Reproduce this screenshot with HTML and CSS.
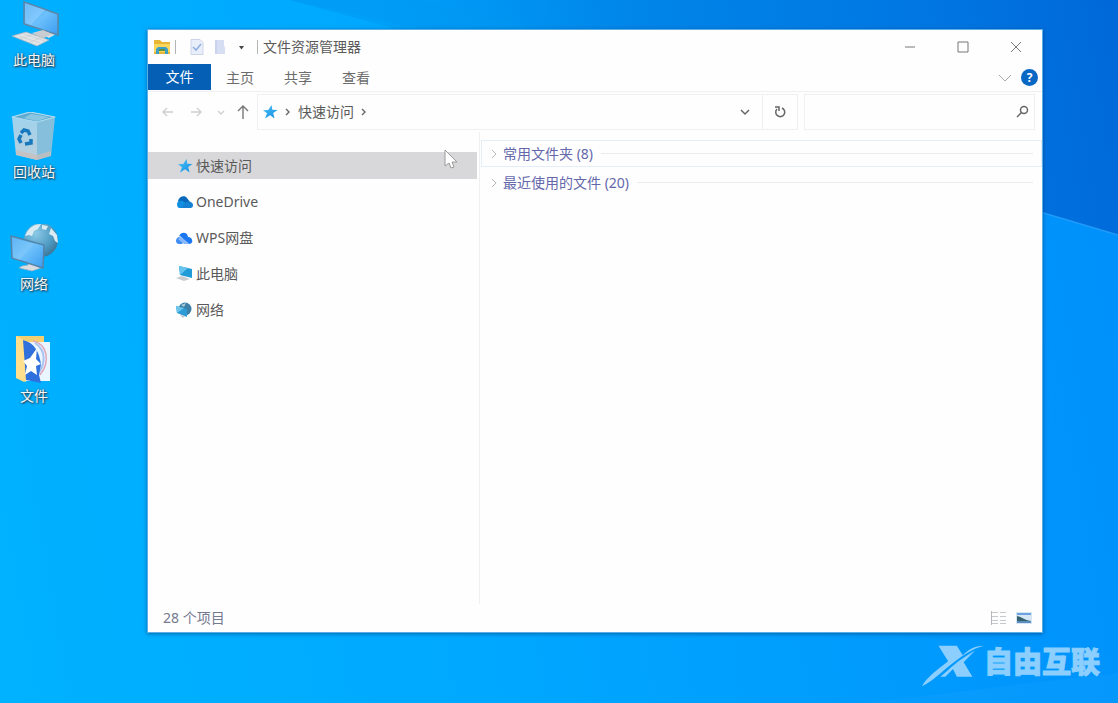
FILE: index.html
```html
<!DOCTYPE html>
<html lang="zh-CN">
<head>
<meta charset="utf-8">
<meta name="viewport" content="width=device-width, initial-scale=1">
<title>文件资源管理器</title>
<link rel="stylesheet" href="styles.css">
</head>
<body>
<svg class="defs" aria-hidden="true">
  <defs>
    <linearGradient id="screen" x1="0" y1="0" x2="1" y2="1">
      <stop offset="0" stop-color="#3fa2ee"/><stop offset=".5" stop-color="#6cc0fb"/><stop offset="1" stop-color="#3b9cf0"/>
    </linearGradient>
    <linearGradient id="binSide" x1="0" y1="0" x2="0" y2="1">
      <stop offset="0" stop-color="#9fd2ee"/><stop offset="1" stop-color="#b9cfdb"/>
    </linearGradient>
    <radialGradient id="globe" cx=".35" cy=".3" r=".8">
      <stop offset="0" stop-color="#8cc9e6"/><stop offset=".6" stop-color="#4f9cc4"/><stop offset="1" stop-color="#3a6f8e"/>
    </radialGradient>
    <linearGradient id="starFill" x1="0" y1="0" x2="1" y2="1">
      <stop offset="0" stop-color="#4cc0f5"/><stop offset="1" stop-color="#138fe4"/>
    </linearGradient>
    <symbol id="star" viewBox="0 0 16 16">
      <path fill="url(#starFill)" d="M9.500 1l.8 4.800 5.200.2-4.300 3 1.300 5.500-4.300-3.200-5.200 3.200 2-5.300L1 6.300l5.300-.4z"/>
    </symbol>
  </defs>
</svg>

<main class="desktop">
  <svg class="wallpaper" viewBox="0 0 1118 703" preserveAspectRatio="none" aria-hidden="true">
    <defs>
      <linearGradient id="sky" gradientUnits="userSpaceOnUse" x1="400" y1="120" x2="1118" y2="0">
        <stop offset="0" stop-color="#008fec" stop-opacity=".3"/>
        <stop offset=".35" stop-color="#0085e8"/>
        <stop offset=".75" stop-color="#0076e2"/>
        <stop offset="1" stop-color="#0068d8"/>
      </linearGradient>
    </defs>
    <path fill="url(#sky)" d="M290 0L560 60 1040 212 1118 235V0z"/>
    <path fill="#0098f2" opacity=".5" d="M290 0L400 30H540L420 0z"/>
    <path fill="none" stroke="#1f9bfa" stroke-width="1.5" d="M1040 212L1118 235"/>
    <path fill="#12a0ff" opacity=".35" d="M860 703L1118 673V703z"/>
  </svg>

  <nav class="icons" aria-label="桌面">
    <a class="shortcut" href="#pc">
      <svg viewBox="0 0 52 50">
        <path fill="#d7dde2" d="M32 34l11-4 7 3-9 5z"/>
        <path fill="url(#screen)" stroke="#5b86a8" stroke-width="1.6" d="M16 2l34 12v21L16 24z"/>
        <path fill="#9bd4ff" opacity=".5" d="M17 3l20 7-14 15-6-2z"/>
        <path fill="#c9cdd2" d="M24 33l11-3 9 4-10 5z"/>
        <path fill="#e0e3e6" stroke="#a9b0b8" stroke-width=".7" d="M4 36l14-4 23 8-12 6z"/>
        <path stroke="#c4c8cd" stroke-width=".6" d="M11 36l21 7M16 34l21 7M12 39l14-5M22 42l13-5"/>
      </svg>
      <span>此电脑</span>
    </a>
    <a class="shortcut" href="#bin">
      <svg viewBox="0 0 52 50">
        <path fill="url(#binSide)" d="M4 5l25 5v38L8 43z"/>
        <path fill="#86bfdc" d="M29 10l18-5-4 39-14 4z"/>
        <path fill="#60acd0" stroke="#b4dcef" stroke-width="1.2" stroke-linejoin="round" d="M4 5L22 0l25 5-18 5z"/>
        <path fill="#8cc7e2" d="M23 2l18 3-12 4-13-3z"/>
        <path fill="#c9bdbb" opacity=".75" d="M8 38l21 5 14-4v5l-14 4-21-5z"/>
        <g fill="none" stroke="#1878bd" stroke-width="3.500"><path d="M13 21l3-3 4 1 2 4M23 27l0 4-6 1M13 31l-2-4 2-4"/></g>
      </svg>
      <span>回收站</span>
    </a>
    <a class="shortcut" href="#network">
      <svg viewBox="0 0 52 50">
        <circle cx="33" cy="16" r="17" fill="url(#globe)"/>
        <path fill="#d9ecf3" d="M17 12C20 4 26 0 33 0l-3 5-4 2-2 5-3-1zM34 1l6 1-2 4-4-1zM43 4l6 7 1 8-3-2-2-5-4-2z"/>
        <path fill="#d9dde1" stroke="#98a9b6" stroke-width=".6" d="M21 38l-1 3-6 1-3 2 13 3 9-3-5-2v-3z"/>
        <path fill="url(#screen)" stroke="#5484a9" stroke-width="1.5" d="M3 12l33 9-1 23L4 34z"/>
        <path fill="#a4dcff" opacity=".3" d="M4 13l22 7-15 16-6-2z"/>
      </svg>
      <span>网络</span>
    </a>
    <a class="shortcut" href="#files">
      <svg viewBox="0 0 52 50">
        <path fill="#f4cf72" d="M8 0h28v40H18l-2 6-8-4z"/>
        <path fill="#eaf6ff" d="M17 6h25v39H18z"/>
        <path fill="#ffdf8c" d="M8 0l10 5v41L8 42z"/>
        <path fill="none" stroke="#dfa7bd" stroke-width="1.500" d="M25 5c14 3 18 20 7 34"/>
        <path fill="none" stroke="#a9c4f0" stroke-width="2" d="M27 7c11 7 11 20 3 31"/>
        <path fill="#2f70dc" d="M15 4c12 3 16 12 18 24l-2 11 2 8-15-3z"/>
        <path fill="#fff" d="M29 12l-1 11 5 5-5 2 1 9-6-4-6 4 2-9-4-5 7-3z"/>
      </svg>
      <span>文件</span>
    </a>
  </nav>

  <section class="window" aria-label="文件资源管理器">
    <header class="titlebar">
      <svg class="i20" viewBox="0 0 20 20" aria-hidden="true">
        <path fill="#e7b634" d="M2 3h6l2 2h8v12H2z"/><path fill="#fbd65c" d="M2 7h16v8H2z"/>
        <path fill="#3c9fc6" d="M4 17v-5l2-2h8l2 2v5h-3v-3H7v3z"/><path fill="#5c9443" d="M7 12h6v2H7z"/>
      </svg>
      <i class="bar"></i>
      <button class="quick" aria-label="属性"><svg viewBox="0 0 16 18"><path fill="#e9effa" stroke="#ccd5e8" d="M2 1.500h9l3 3v12H2z"/><path fill="none" stroke="#93afe0" stroke-width="1.600" d="M4 9l3 3 5-6"/></svg></button>
      <button class="quick" aria-label="新建文件夹"><svg viewBox="0 0 16 18"><path fill="#d5def3" d="M3 2h9v5l1 3v6H3z"/><path fill="#c8d3ee" d="M3 2h2v14H3z"/></svg></button>
      <button class="quick" aria-label="自定义快速访问工具栏"><svg viewBox="0 0 16 18"><path fill="#444" d="M4 8h5l-2.500 3.500z"/></svg></button>
      <i class="bar title-bar"></i>
      <h1>文件资源管理器</h1>
      <div class="controls">
        <button aria-label="最小化"><svg viewBox="0 0 14 14"><path d="M2 7h10"/></svg></button>
        <button aria-label="最大化"><svg viewBox="0 0 14 14"><path d="M2 2h10v10H2z"/></svg></button>
        <button aria-label="关闭"><svg viewBox="0 0 14 14"><path d="M2 2l10 10M12 2L2 12"/></svg></button>
      </div>
    </header>

    <div class="ribbon">
      <button class="file">文件</button>
      <button>主页</button>
      <button>共享</button>
      <button>查看</button>
      <button class="expand" aria-label="展开功能区"><svg viewBox="0 0 16 16"><path d="M2 5l6 6 6-6"/></svg></button>
      <button class="help" aria-label="帮助">?</button>
    </div>

    <div class="toolbar">
      <div class="history">
        <button class="off" aria-label="后退"><svg viewBox="0 0 16 16"><path d="M13 8H3M7 4L3 8l4 4"/></svg></button>
        <button class="off" aria-label="前进"><svg viewBox="0 0 16 16"><path d="M3 8h10M9 4l4 4-4 4"/></svg></button>
        <button class="off small" aria-label="最近浏览的位置"><svg viewBox="0 0 16 16"><path d="M5 7l3 3 3-3"/></svg></button>
        <button class="up" aria-label="上移"><svg viewBox="0 0 16 16"><path d="M8 15V2M3 7l5-5 5 5"/></svg></button>
      </div>
      <div class="address">
        <svg class="i16" aria-hidden="true"><use href="#star"/></svg>
        <svg class="sep" viewBox="0 0 8 12" aria-hidden="true"><path d="M2 3l3 3-3 3"/></svg>
        <a href="#quick">快速访问</a>
        <svg class="sep" viewBox="0 0 8 12" aria-hidden="true"><path d="M2 3l3 3-3 3"/></svg>
        <button class="drop" aria-label="以前的位置"><svg viewBox="0 0 16 16"><path d="M4 6l4 4 4-4"/></svg></button>
        <button class="refresh" aria-label="刷新"><svg viewBox="0 0 16 16"><path d="M10 4a4.500 4.500 0 1 1-5 1M3 3h4v4"/></svg></button>
      </div>
      <label class="search">
        <input type="text" aria-label="搜索">
        <svg viewBox="0 0 16 16" aria-hidden="true"><circle cx="10" cy="6" r="3.500"/><path d="M7.500 8.500L3 13"/></svg>
      </label>
    </div>

    <div class="content">
      <nav class="tree" aria-label="导航窗格">
        <a class="on" href="#quick"><svg viewBox="0 0 18 16"><use href="#star" x="2" width="16" height="16"/></svg>快速访问</a>
        <a href="#onedrive"><svg viewBox="0 0 18 16"><path fill="#0868bb" d="M3 7c1-5 7-6 9-3l3 4-9 4z"/><path fill="#128fe0" d="M4 14a4 4 0 0 1 0-7c4-1 6 1 10 7z"/><path fill="#1680d2" d="M10 9c3-3 8-1 8 2s-2 3-4 3H6z"/></svg>OneDrive</a>
        <a href="#wps"><svg viewBox="0 0 18 16"><path fill="#1c78f0" d="M4 7c1-6 9-5 9 0 5 0 6 7 1 7L5 6z"/><path fill="#3e8df4" d="M4 7c-4 1-4 7 0 7h3l3-4z"/><path fill="#8ab9fb" d="M3 9l3-2 8 7H9z"/></svg>WPS网盘</a>
        <a href="#pc"><svg viewBox="0 0 18 16"><path fill="#219bd7" d="M4 0l13 3v9L5 9z"/><path fill="#67c4ee" d="M4 0l9 2-8 7z"/><path fill="#c9ccd1" d="M1 12l6-2 8 3-6 2z"/></svg>此电脑</a>
        <a href="#network"><svg viewBox="0 0 18 16"><circle cx="10" cy="7" r="6.500" fill="#3d7fa6"/><path fill="#a9cbd8" d="M6 3l5-2-2 4z"/><path fill="#2d9bd6" d="M1 4l11 3v8L2 11z"/><path fill="#6cc6ec" d="M1 4l8 2-7 5z"/><path fill="#bfc5ca" d="M5 13l5 1-2 2z"/></svg>网络</a>
      </nav>
      <div class="groups">
        <button class="focus"><svg viewBox="0 0 12 12"><path d="M4 2l4 4-4 4"/></svg><span>常用文件夹 (8)</span></button>
        <button><svg viewBox="0 0 12 12"><path d="M4 2l4 4-4 4"/></svg><span>最近使用的文件 (20)</span></button>
      </div>
    </div>

    <footer class="status">
      <span>28 个项目</span>
      <button aria-label="详细信息"><svg viewBox="0 0 16 14"><path fill="none" stroke="#b4b7bb" d="M1.500 0v14"/><path fill="none" stroke="#c6c9cc" stroke-dasharray="6 2" d="M2 1.500h14M2 5.500h14M2 9.500h14M2 12.500h14"/></svg></button>
      <button aria-label="大缩略图"><svg viewBox="0 0 16 14"><path fill="#d7e6f5" d="M0 1h16v12H0z"/><path fill="#6ca2df" d="M1 2h14v2H1z"/><path fill="#35616b" d="M1 5c5 1 7 4 14 5H1z"/><path fill="#5a8cc0" d="M1 10h14v2H1z"/></svg></button>
    </footer>
  </section>

  <svg class="cursor" viewBox="0 0 14 20" aria-hidden="true"><path fill="#fff" stroke="#9a9a9a" d="M1 1v16l4-3 2 5 3-1-2-5h5z"/></svg>

  <div class="brand">
    <svg viewBox="0 0 64 44" aria-hidden="true">
      <path d="M17 1h19l6 10C48 5 54 1 64 1 52 4 42 11 32 19 20 28 12 37 0 43c4-8 12-14 22-22l5-4z"/>
      <path d="M27 26c9-8 17-14 28-20-4 4-8 8-12 12l9 15H36l-4-8-8 8h-5z"/>
    </svg>
    <span>自由互联</span>
  </div>
</main>
</body>
</html>
```
FILE: styles.css
```css
* {
  box-sizing: border-box;
}

body {
  margin: 0;
  font-family: "Noto Sans", "Noto Sans CJK SC", sans-serif;
  font-size: 14px;
  line-height: 20px;
  color: #5a5a5a;
}

button {
  display: flex;
  align-items: center;
  justify-content: center;
  padding: 0;
  border: 0;
  background: none;
  color: inherit;
  font: inherit;
}

a {
  color: inherit;
  text-decoration: none;
}

svg {
  display: block;
  flex: none;
}

.defs {
  position: absolute;
  width: 0;
  height: 0;
}

.desktop {
  position: relative;
  min-height: 100vh;
  overflow: hidden;
  background: linear-gradient(80deg, #00b2ff 0, #00aaff 35%, #008ffb 100%);
}

.wallpaper {
  position: absolute;
  inset: 0;
  width: 100%;
  height: 100%;
}

.icons {
  position: relative;
  display: flex;
  flex-direction: column;
  gap: 42px;
  width: 68px;
}

.shortcut {
  display: flex;
  flex-direction: column;
  align-items: center;
  color: #f4f8fb;
  text-shadow: 1px 1px 2px #234, 0 0 2px #456;
}

.shortcut svg {
  width: 52px;
  height: 50px;
}

.window {
  position: absolute;
  inset: 29px 75px 70px 147px;
  display: flex;
  flex-direction: column;
  border: 1px solid #59aee8;
  background: #fefefe;
  box-shadow: 0 1px 4px rgba(0, 50, 110, 0.55);
}

.titlebar {
  display: flex;
  align-items: center;
  height: 34px;
  padding-left: 4px;
}

.i20 {
  width: 20px;
  height: 20px;
}

.bar {
  width: 1px;
  height: 14px;
  margin: 0 12px 0 3px;
  background: #b5b5b5;
}

.title-bar {
  margin: 0 5px;
}

.quick {
  width: 18px;
  margin-right: 5px;
}

.quick:nth-of-type(3) {
  margin-right: 0;
}

.quick svg {
  width: 16px;
  height: 18px;
}

h1 {
  margin: 0;
  font-size: 14px;
  font-weight: 400;
}

.controls {
  display: flex;
  margin-left: auto;
}

.controls button {
  width: 53px;
  height: 32px;
}

.controls svg {
  width: 14px;
  height: 14px;
  fill: none;
  stroke: #777;
}

.ribbon {
  display: flex;
  align-items: center;
  height: 28px;
  padding-right: 4px;
  border-bottom: 1px solid #f0f0f2;
}

.ribbon button {
  width: 58px;
  height: 26px;
  color: #6c6c6c;
}

.ribbon .file {
  width: 63px;
  align-self: flex-start;
  background: #0560b5;
  color: #fff;
}

.ribbon .expand {
  width: 16px;
  margin: 0 8px 0 auto;
}

.expand svg {
  width: 16px;
  height: 16px;
  fill: none;
  stroke: #aaa;
}

.ribbon .help {
  width: 17px;
  height: 17px;
  border-radius: 50%;
  background: #0868c4;
  color: #fff;
  font-size: 12px;
  font-weight: 700;
}

.toolbar {
  display: flex;
  height: 40px;
  padding: 2px 7px 2px 0;
}

.history {
  display: flex;
  align-items: center;
  width: 109px;
  padding-left: 12px;
  gap: 12px;
}

.history button {
  width: 16px;
  height: 24px;
}

.history .small {
  width: 10px;
}

.history .up {
  margin-left: -3px;
}

.history svg {
  width: 16px;
  height: 16px;
  fill: none;
  stroke: #777;
  stroke-width: 1.4;
}

.history .off svg {
  stroke: #d0d0d0;
}

.address {
  display: flex;
  flex: 1;
  align-items: center;
  margin-right: 6px;
  padding-left: 4px;
  border: 1px solid #f0f0f3;
}

.i16 {
  width: 16px;
  height: 16px;
}

.sep {
  width: 8px;
  height: 12px;
  margin: 0 6px;
  fill: none;
  stroke: #666;
  stroke-width: 1.4;
}

.drop,
.refresh {
  width: 35px;
  height: 34px;
}

.drop {
  margin-left: auto;
}

.refresh {
  border-left: 1px solid #f0f0f3;
}

.drop svg,
.refresh svg,
.search svg {
  width: 16px;
  height: 16px;
  fill: none;
  stroke: #666;
  stroke-width: 1.5;
}

.search {
  display: flex;
  align-items: center;
  width: 26%;
  padding-right: 4px;
  border: 1px solid #f0f0f3;
}

.search input {
  flex: 1;
  min-width: 0;
  height: 32px;
  border: 0;
  outline: 0;
  background: none;
  font: inherit;
}

.content {
  display: flex;
  flex: 1;
}

.tree {
  display: flex;
  flex-direction: column;
  gap: 9px;
  width: 332px;
  padding: 20px 2px 0 0;
  border-right: 1px solid #f0f0f3;
}

.tree a {
  display: flex;
  align-items: center;
  gap: 3px;
  height: 27px;
  padding-left: 27px;
}

.tree .on {
  background: #d8d8da;
}

.tree svg {
  width: 18px;
  height: 16px;
}

.groups {
  flex: 1;
  padding: 8px 0 0 1px;
}

.groups button {
  width: 100%;
  height: 27px;
  margin-bottom: 2px;
  padding: 0 8px 0 6px;
  border: 1px solid transparent;
  color: #6468ab;
}

.groups .focus {
  border-color: #e3eef8;
}

.groups svg {
  width: 12px;
  height: 12px;
  margin-right: 3px;
  fill: none;
  stroke: #b9b9b9;
}

.groups button::after {
  content: "";
  flex: 1;
  height: 1px;
  margin-left: 8px;
  background: #ececef;
}

.status {
  display: flex;
  align-items: center;
  height: 28px;
  padding: 0 10px 0 15px;
  gap: 10px;
  color: #757990;
}

.status span {
  margin-right: auto;
}

.status svg {
  width: 16px;
  height: 14px;
}

.cursor {
  position: absolute;
  top: 149px;
  left: 444px;
  width: 14px;
  height: 20px;
}

.brand {
  position: absolute;
  right: 18px;
  bottom: 15px;
  display: flex;
  align-items: flex-start;
  color: #8ccfff;
  font-size: 29px;
  font-weight: 900;
  line-height: 36px;
  -webkit-text-stroke: 1px #8ccfff;
}

.brand svg {
  width: 62px;
  height: 44px;
  fill: currentColor;
}
```
